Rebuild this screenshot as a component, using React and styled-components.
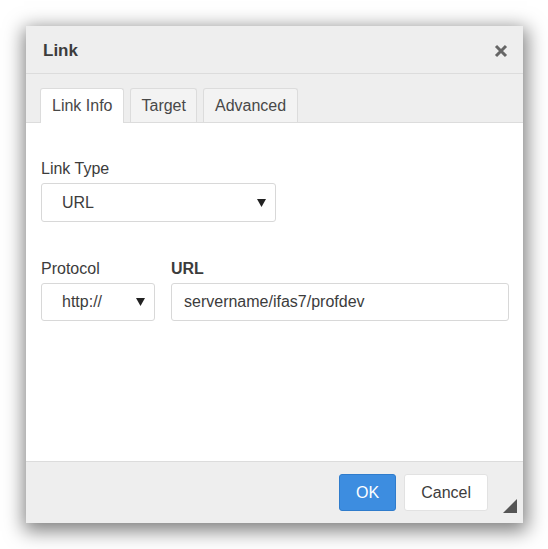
import React from 'react';
import styled, { createGlobalStyle } from 'styled-components';

const GlobalStyle = createGlobalStyle`
  html, body {
    margin: 0;
    padding: 0;
    background: #ffffff;
  }
  * {
    box-sizing: border-box;
  }
`;

const Page = styled.div`
  width: 548px;
  height: 549px;
  padding: 26px 0 0 26px;
  font-family: 'Liberation Sans', Arial, sans-serif;
  color: #484848;
`;

const Dialog = styled.div`
  width: 497px;
  height: 497px;
  display: flex;
  flex-direction: column;
  background: #eeeeee;
  box-shadow: 1px 5px 18px 3px rgba(0, 0, 0, 0.5);
`;

const Header = styled.div`
  height: 48px;
  flex: none;
  display: flex;
  align-items: center;
  justify-content: space-between;
  padding: 3px 14px 0 17px;
  border-bottom: 1px solid #dcdcdc;
`;

const Title = styled.div`
  font-size: 17px;
  font-weight: bold;
  color: #3c3c3c;
`;

const Close = styled.div`
  width: 16px;
  height: 16px;
  display: flex;
  align-items: center;
  justify-content: center;
`;

const TabStrip = styled.div`
  flex: none;
  display: flex;
  gap: 6px;
  padding: 14px 14px 0 14px;
  border-bottom: 1px solid #dcdcdc;
`;

const Tab = styled.div`
  padding: 0 ${p => p.$pad}px;
  display: flex;
  align-items: center;
  font-size: 16px;
  color: #484848;
  background: ${p => (p.$active ? '#ffffff' : '#f3f3f3')};
  border: 1px solid #dcdcdc;
  border-bottom: none;
  border-radius: 3px 3px 0 0;
  margin-bottom: ${p => (p.$active ? '-1px' : '0')};
  height: ${p => (p.$active ? '35px' : '34px')};
`;

const Body = styled.div`
  flex: 1;
  background: #ffffff;
  padding: 36px 14px 0 15px;
  display: flex;
  flex-direction: column;
`;

const Field = styled.div`
  display: flex;
  flex-direction: column;
  gap: 5px;
  width: ${p => p.$width};
`;

const Row = styled.div`
  display: flex;
  gap: 16px;
  margin-top: ${p => p.$top || 0}px;
`;

const Label = styled.div`
  font-size: 16px;
  line-height: 19px;
  font-weight: ${p => (p.$bold ? 'bold' : 'normal')};
  color: #3c3c3c;
`;

const SelectBox = styled.div`
  width: ${p => p.$width}px;
  height: ${p => p.$height}px;
  display: flex;
  align-items: center;
  justify-content: space-between;
  padding: 0 9px 0 20px;
  border: 1px solid #d8d8d8;
  border-radius: 3px;
  background: #ffffff;
  font-size: 16px;
  color: #3c3c3c;
`;

const Input = styled.div`
  flex: 1;
  height: 38px;
  display: flex;
  align-items: center;
  padding: 0 12px;
  border: 1px solid #d8d8d8;
  border-radius: 3px;
  background: #ffffff;
  font-size: 16px;
  color: #3c3c3c;
`;

const Footer = styled.div`
  position: relative;
  height: 62px;
  flex: none;
  display: flex;
  align-items: center;
  justify-content: flex-end;
  gap: 8px;
  padding: 0 35px 0 0;
  border-top: 1px solid #dcdcdc;
`;

const Button = styled.div`
  height: 37px;
  padding: 0 ${p => p.$pad}px;
  display: flex;
  align-items: center;
  justify-content: center;
  font-size: 16px;
  border-radius: 3px;
  background: ${p => (p.$primary ? '#3d8de0' : '#ffffff')};
  color: ${p => (p.$primary ? '#ffffff' : '#3c3c3c')};
  border: 1px solid ${p => (p.$primary ? '#2f7ccc' : '#e2e2e2')};
`;

const Resizer = styled.svg`
  position: absolute;
  right: 6px;
  bottom: 10px;
`;

const Arrow = () => (
  <svg width="9" height="8" viewBox="0 0 9 8">
    <polygon points="0,0 9,0 4.5,8" fill="#222" />
  </svg>
);

const App = () => {
  return (
    <Page>
      <GlobalStyle />
      <Dialog>
        <Header>
          <Title>Link</Title>
          <Close>
            <svg width="14" height="14" viewBox="0 0 14 14">
              <path d="M2 2 L12 12 M12 2 L2 12" stroke="#666" strokeWidth="3" />
            </svg>
          </Close>
        </Header>
        <TabStrip>
          <Tab $active $pad={11}>Link Info</Tab>
          <Tab $pad={10}>Target</Tab>
          <Tab $pad={11}>Advanced</Tab>
        </TabStrip>
        <Body>
          <Field $width="auto">
            <Label>Link Type</Label>
            <SelectBox $width={235} $height={39}>
              <span>URL</span>
              <Arrow />
            </SelectBox>
          </Field>
          <Row $top={37}>
            <Field $width="114px">
              <Label>Protocol</Label>
              <SelectBox $width={114} $height={38}>
                <span>http://</span>
                <Arrow />
              </SelectBox>
            </Field>
            <Field $width="338px">
              <Label $bold>URL</Label>
              <Input>servername/ifas7/profdev</Input>
            </Field>
          </Row>
        </Body>
        <Footer>
          <Button $primary $pad={16}>OK</Button>
          <Button $pad={16}>Cancel</Button>
          <Resizer width="14" height="14" viewBox="0 0 14 14">
            <polygon points="14,0 14,14 0,14" fill="#555" />
          </Resizer>
        </Footer>
      </Dialog>
    </Page>
  );
};

export default App;
